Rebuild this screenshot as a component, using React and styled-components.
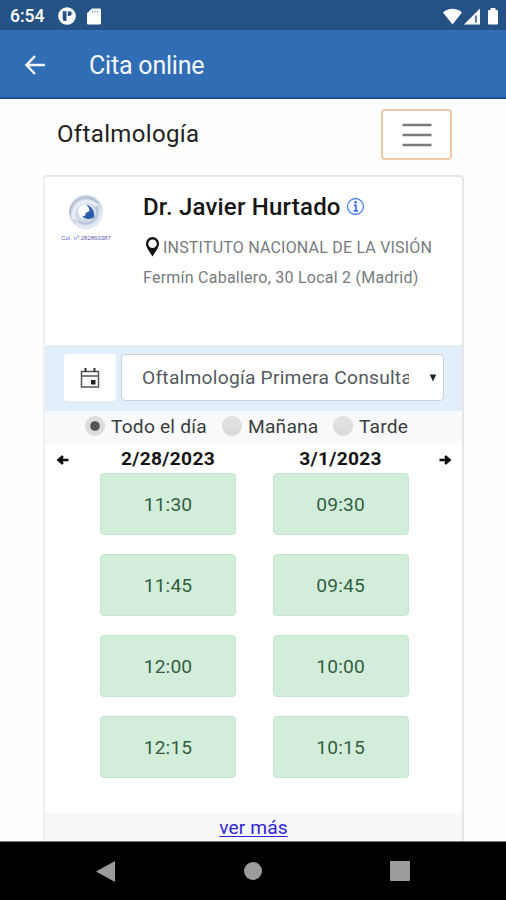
import React from "react";
import styled, { createGlobalStyle } from "styled-components";

const GlobalStyle = createGlobalStyle`
  *, *::before, *::after { box-sizing: border-box; }
  body { margin: 0; background: #fff; font-family: Roboto, "Liberation Sans", sans-serif; }
  svg { display: block; flex: none; }
`;

const Screen = styled.div`
  width: 506px;
  height: 900px;
  display: flex;
  flex-direction: column;
  overflow: hidden;
  background: #fefefe;
`;

const StatusBar = styled.div`
  flex: none;
  height: 30px;
  padding: 2px 7px 0 10px;
  display: flex;
  align-items: center;
  background: #255285;
  color: #fff;
`;

const Clock = styled.span`
  width: 48px;
  font-size: 17.5px;
  font-weight: 500;
  letter-spacing: 0;
`;

const StatusIcons = styled.div`
  display: flex;
  align-items: center;
  gap: ${(p) => p.$gap}px;
  margin-left: ${(p) => (p.$end ? "auto" : "0")};
`;

const AppBar = styled.header`
  flex: none;
  height: 69px;
  padding: 2px 0 0 24px;
  display: flex;
  align-items: center;
  gap: 43px;
  background: #316db5;
  border-bottom: 2px solid #1c5096;
  color: #f4f8ff;
`;

const AppTitle = styled.h1`
  margin: 2px 0 0;
  font-size: 25px;
  font-weight: 400;
  letter-spacing: -0.2px;
  white-space: nowrap;
`;

const Content = styled.main`
  flex: 1;
  min-height: 0;
  padding: 0 42px 0 43px;
  overflow: hidden;
`;

const SectionBar = styled.div`
  height: 76px;
  padding: 10px 12px 16px 14px;
  display: flex;
  justify-content: space-between;
`;

const SectionTitle = styled.h2`
  margin: 0;
  font-size: 24px;
  line-height: 50px;
  font-weight: 400;
  letter-spacing: 0.35px;
  color: #222;
`;

const MenuButton = styled.button`
  width: 71px;
  height: 51px;
  padding: 0;
  display: grid;
  place-items: center;
  background: #fff;
  border: 2px solid #edcaa7;
  border-radius: 4px;
`;

const Card = styled.section`
  height: 680px;
  border: 2px solid #e4e6e8;
  border-left-color: #eff0f1;
  border-radius: 4px 4px 0 0;
  background: #fff;
`;

const Doctor = styled.div`
  height: 168px;
  padding: 14px 0 0 13px;
  display: flex;
`;

const LogoColumn = styled.div`
  width: 56px;
  margin-right: 29px;
  padding-top: 3px;
  display: flex;
  flex-direction: column;
  align-items: center;
`;

const LicenseNumber = styled.span`
  margin-top: 4px;
  font: 400 6px/8px "Liberation Sans", sans-serif;
  color: #5c5cb0;
  white-space: nowrap;
`;

const DoctorInfo = styled.div`
  flex: 1;
  white-space: nowrap;
`;

const DoctorName = styled.h3`
  margin: 0;
  height: 31px;
  display: flex;
  align-items: center;
  gap: 5px;
  font-size: 24px;
  font-weight: 500;
  letter-spacing: 0.2px;
  color: #151515;
`;

const AddressLine = styled.div`
  height: 30px;
  margin-top: ${(p) => p.$top || 0}px;
  display: flex;
  align-items: center;
  gap: 3px;
  font-size: 16px;
  letter-spacing: ${(p) => p.$spacing}px;
  color: #777b7e;
`;

const ServiceBar = styled.div`
  height: 66px;
  padding: 9px 18px 10px 19px;
  display: flex;
  gap: 5px;
  background: #e2effb;
`;

const CalendarButton = styled.button`
  width: 52px;
  height: 47px;
  padding: 2px 0 0;
  display: grid;
  place-items: center;
  background: #fff;
  border: 0;
  border-radius: 4px;
`;

const ServiceSelect = styled.div`
  flex: 1;
  height: 47px;
  padding: 0 6px 0 20px;
  display: flex;
  align-items: center;
  justify-content: space-between;
  background: #fff;
  border: 1px solid #c9d1d9;
  border-radius: 4px;
`;

const ServiceName = styled.span`
  width: 267px;
  overflow: hidden;
  white-space: nowrap;
  font-size: 19.2px;
  line-height: 30px;
  letter-spacing: 0.25px;
  color: #555a5f;
`;

const DayParts = styled.div`
  height: 33px;
  padding: 0 0 3px 40px;
  display: flex;
  align-items: center;
  background: #f8f9fa;
`;

const DayPart = styled.label`
  width: ${(p) => p.$width}px;
  display: flex;
  align-items: center;
  gap: 6px;
  font-size: 19.2px;
  letter-spacing: 0.2px;
  color: #3a3d40;
  white-space: nowrap;
`;

const Radio = styled.span`
  flex: none;
  width: 20px;
  height: 20px;
  border-radius: 50%;
  border: 1px solid #dcdcdc;
  background: ${(p) =>
    p.$checked
      ? "radial-gradient(circle, #555 0 4.3px, #ddd 5.3px)"
      : "linear-gradient(#e3e3e3, #d9d9d9)"};
`;

const Schedule = styled.div`
  height: 369px;
  padding: 0 10px 0 11px;
  display: grid;
  grid-template-columns: 44px 136px 36.6px 136px 43.4px;
  justify-content: start;
`;

const Arrow = styled.div`
  height: 31px;
  display: flex;
  align-items: center;
  justify-content: ${(p) => (p.$end ? "flex-end" : "flex-start")};
  grid-column: ${(p) => (p.$end ? 5 : 1)};
  grid-row: 1;
`;

const Day = styled.div`
  grid-column: ${(p) => p.$column};
  grid-row: 1;
`;

const DayTitle = styled.div`
  height: 29px;
  text-align: center;
  font-size: 19.2px;
  line-height: 29px;
  font-weight: 700;
  letter-spacing: 0.3px;
  color: #151515;
`;

const SlotList = styled.div`
  display: flex;
  flex-direction: column;
  gap: 19px;
`;

const Slot = styled.button`
  width: 136px;
  height: 62px;
  padding: 0;
  background: #d3eddb;
  border: 1px solid #c5e6ce;
  border-radius: 4px;
  font: 400 19.2px Roboto, sans-serif;
  letter-spacing: 0.15px;
  color: #315f3d;
`;

const More = styled.div`
  height: 28px;
  text-align: center;
  background: #f7f8fa;
  line-height: 29px;
`;

const MoreLink = styled.a`
  font-size: 19.2px;
  letter-spacing: 0.1px;
  color: #2f25dc;
  text-decoration: underline;
  text-underline-offset: 2px;
`;

const NavBar = styled.nav`
  flex: none;
  height: 59px;
  padding: 0 96px;
  border-top: 1px solid #777;
  display: flex;
  align-items: center;
  justify-content: space-between;
  background: #000;
`;

const days = [
  { date: "2/28/2023", column: 2, slots: ["11:30", "11:45", "12:00", "12:15"] },
  { date: "3/1/2023", column: 4, slots: ["09:30", "09:45", "10:00", "10:15"] },
];

const dayParts = [
  { label: "Todo el día", width: 137, checked: true },
  { label: "Mañana", width: 111 },
  { label: "Tarde", width: 90 },
];

function ClinicLogo() {
  return (
    <svg width="36" height="36" viewBox="0 0 36 36">
      <circle cx="18" cy="18" r="17" fill="#d0dae8" />
      <path d="M2 21A16 16 0 0 1 30 9" fill="none" stroke="#b4c1d4" strokeWidth="2" />
      <path d="M6 25A13.500 13.500 0 0 1 29 12" fill="none" stroke="#e9eff6" strokeWidth="3" />
      <path d="M33 15A15 15 0 0 1 8 29" fill="none" stroke="#e3eaf3" strokeWidth="3" />
      <path d="M28 12A12 12 0 0 1 10 27" fill="none" stroke="#b7c5d9" strokeWidth="2" />
      <circle cx="17.500" cy="17.500" r="7.500" fill="#fff" />
      <path d="M18 10.500c5 1 9 6 8 13-4 2-9 2-12-1 3 0 4-1.500 3.500-3.500l4-2c0-3-1.500-5-3.500-6.500z" fill="#2c5da8" />
    </svg>
  );
}

function DayArrow({ flip }) {
  const mirror = flip ? "matrix(-1 0 0 1 13 0)" : undefined;
  return (
    <svg width="13" height="12" viewBox="0 0 13 12">
      <g transform={mirror}>
        <path d="M3 6h9.500" stroke="#111" strokeWidth="2.600" />
        <path d="M.5 6 6 1.200 7.500 2.200 6.800 6l.7 3.800-1.500 1z" fill="#111" />
      </g>
    </svg>
  );
}

export default function App() {
  return (
    <Screen>
      <GlobalStyle />
      <StatusBar>
        <Clock>6:54</Clock>
        <StatusIcons $gap={11}>
          <svg width="18" height="18" viewBox="0 0 18 18">
            <circle cx="9" cy="9" r="8.8" fill="#fff" />
            <path d="M4.700 4.300h3.800v9.700H7a2.300 2.300 0 0 1-2.300-2.300z" fill="#255285" />
            <path d="M9.800 4.300h1.700a2.300 2.300 0 0 1 0 4.600H9.800z" fill="#255285" />
          </svg>
          <svg width="14" height="17" viewBox="0 0 14 17">
            <path d="M5 .5h7.500A1.200 1.200 0 0 1 14 2v13.200a1.400 1.400 0 0 1-1.400 1.400H1.400A1.400 1.400 0 0 1 0 15.200V5.200z" fill="#fff" />
            <path d="M5.500 2.500v2M8 2.500v2M10.500 2.500v2" stroke="#8199b3" />
          </svg>
        </StatusIcons>
        <StatusIcons $gap={2} $end>
          <svg width="19" height="17" viewBox="0 0 19 17">
            <path d="M0 4.500C5.500-.5 13.500-.5 19 4.500L9.500 16.500z" fill="#fff" />
          </svg>
          <svg width="16" height="17" viewBox="0 0 16 17">
            <path d="M0 16.500 16 .5v16z" fill="#fff" />
            <path d="M11.200 7.500h1.500v7h-1.500z" fill="#255285" />
          </svg>
          <svg width="17" height="17" viewBox="0 0 17 17">
            <path d="M8.500 0h5v2h1.200c.8 0 1.300.5 1.300 1.300v11.900c0 .8-.5 1.300-1.300 1.300H7.300c-.8 0-1.300-.5-1.300-1.300V3.300C6 2.500 6.500 2 7.300 2h1.200z" fill="#fff" />
          </svg>
        </StatusIcons>
      </StatusBar>

      <AppBar>
        <svg width="22" height="22" viewBox="0 0 22 22">
          <path d="M11 2 2.500 11l8.500 9M2.500 11H21" fill="none" stroke="#f4f8ff" strokeWidth="2.500" />
        </svg>
        <AppTitle>Cita online</AppTitle>
      </AppBar>

      <Content>
        <SectionBar>
          <SectionTitle>Oftalmología</SectionTitle>
          <MenuButton aria-label="Menú">
            <svg width="30" height="24" viewBox="0 0 30 24">
              <path d="M.5 2h29M.5 12h29M.5 22h29" stroke="#7c7c7c" strokeWidth="2.300" />
            </svg>
          </MenuButton>
        </SectionBar>

        <Card>
          <Doctor>
            <LogoColumn>
              <ClinicLogo />
              <LicenseNumber>Col. nº:282860387</LicenseNumber>
            </LogoColumn>
            <DoctorInfo>
              <DoctorName>
                Dr. Javier Hurtado
                <svg width="19" height="19" viewBox="0 0 19 19">
                  <circle cx="9.500" cy="9.500" r="8" fill="#f4f8ff" stroke="#4f83f5" strokeWidth="1.300" />
                  <path d="M8 8.200h2v5.300M7.500 13.800h4.500" fill="none" stroke="#2862ea" strokeWidth="1.500" />
                  <circle cx="9.600" cy="5.300" r="1.200" fill="#2862ea" />
                </svg>
              </DoctorName>
              <AddressLine $top={10} $spacing={0.2}>
                <svg width="17" height="20" viewBox="0 0 17 20">
                  <path fillRule="evenodd" d="M9.500 0a6.500 6.500 0 0 1 6.500 6.700c0 3.500-3 7-6.500 12.800C6 13.700 3 10.200 3 6.700A6.500 6.500 0 0 1 9.500 0zm0 2.500a4.300 4.300 0 1 0 0 8.600 4.300 4.300 0 0 0 0-8.600z" fill="#111" />
                </svg>
                INSTITUTO NACIONAL DE LA VISIÓN
              </AddressLine>
              <AddressLine $spacing={0.24}>Fermín Caballero, 30 Local 2 (Madrid)</AddressLine>
            </DoctorInfo>
          </Doctor>

          <ServiceBar>
            <CalendarButton aria-label="Calendario">
              <svg width="20" height="21" viewBox="0 0 20 21">
                <path d="M1.500 3.500h17v15.500h-17zM1.500 8h17" fill="none" stroke="#555" strokeWidth="1.500" />
                <path d="M5.500 0v4M14.500 0v4" stroke="#333" strokeWidth="2" />
                <path d="M11 12h4.500v4.500H11z" fill="#222" />
              </svg>
            </CalendarButton>
            <ServiceSelect>
              <ServiceName>Oftalmología Primera Consulta</ServiceName>
              <svg width="8" height="8" viewBox="0 0 8 8">
                <path d="M.8.5h6.400L4 7.500z" fill="#222" />
              </svg>
            </ServiceSelect>
          </ServiceBar>

          <DayParts>
            {dayParts.map((part) => (
              <DayPart key={part.label} $width={part.width}>
                <Radio $checked={part.checked} />
                {part.label}
              </DayPart>
            ))}
          </DayParts>

          <Schedule>
            <Arrow><DayArrow /></Arrow>
            {days.map((day) => (
              <Day key={day.date} $column={day.column}>
                <DayTitle>{day.date}</DayTitle>
                <SlotList>
                  {day.slots.map((slot) => <Slot key={slot}>{slot}</Slot>)}
                </SlotList>
              </Day>
            ))}
            <Arrow $end><DayArrow flip /></Arrow>
          </Schedule>

          <More><MoreLink>ver más</MoreLink></More>
        </Card>
      </Content>

      <NavBar>
        <svg width="19" height="21" viewBox="0 0 19 21"><path d="M19 0v21L0 10.500z" fill="#9c9c9c" /></svg>
        <svg width="18" height="18" viewBox="0 0 18 18"><circle cx="9" cy="9" r="9" fill="#9c9c9c" /></svg>
        <svg width="20" height="20" viewBox="0 0 20 20"><rect width="20" height="20" rx="1" fill="#9c9c9c" /></svg>
      </NavBar>
    </Screen>
  );
}
